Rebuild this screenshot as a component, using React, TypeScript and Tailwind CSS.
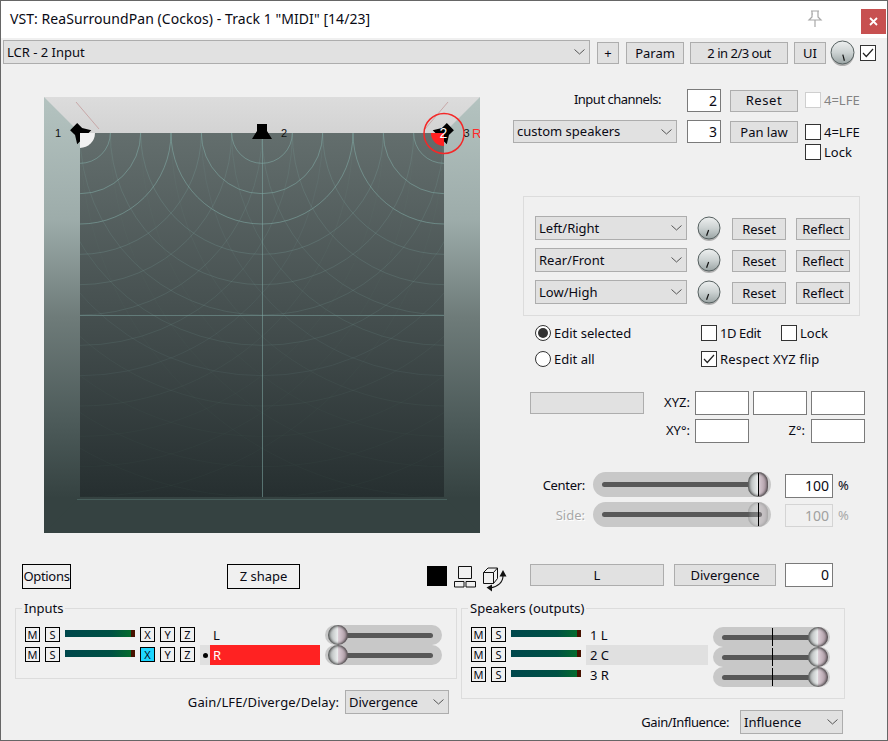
import React from "react";

const Chevron = () => (
  <svg width="11" height="6" viewBox="0 0 11 6" className="shrink-0">
    <path d="M0.5 0.5 L5.5 5 L10.5 0.5" fill="none" stroke="#555" strokeWidth="1" />
  </svg>
);

function Select({ label, className }: { label: string; className: string }) {
  return (
    <div className={"flex items-center justify-between pl-[3px] pr-[4px] bg-[#e1e1e1] border border-[#adadad] " + className}>
      <span className="whitespace-nowrap">{label}</span>
      <Chevron />
    </div>
  );
}

function Btn({ label, className }: { label?: string; className: string }) {
  return (
    <div className={"flex items-center justify-center bg-[#e1e1e1] border border-[#adadad] whitespace-nowrap shrink-0 " + className}>
      {label}
    </div>
  );
}

function Input({ value, className }: { value?: string; className: string }) {
  return (
    <div className={"flex items-center justify-end pr-[3px] bg-white border border-[#7a7a7a] shrink-0 text-[14px] " + className}>
      {value}
    </div>
  );
}

function Check({ label, on, dim, className }: { label: string; on?: boolean; dim?: boolean; className?: string }) {
  return (
    <div className={"flex items-center h-[16px] whitespace-nowrap " + (className ?? "")}>
      <div className={"w-[16px] h-[16px] shrink-0 bg-white border flex items-center justify-center " + (dim ? "border-[#cfcfcf]" : "border-[#333]")}>
        {on && (
          <svg width="12" height="10" viewBox="0 0 12 10">
            <path d="M1 5 L4.3 8.5 L11 1" fill="none" stroke="#222" strokeWidth="1.2" />
          </svg>
        )}
      </div>
      <span className={"ml-[3px] " + (dim ? "text-[#838383]" : "")}>{label}</span>
    </div>
  );
}

function Radio({ label, on, className }: { label: string; on?: boolean; className?: string }) {
  return (
    <div className={"flex items-center h-[16px] whitespace-nowrap " + (className ?? "")}>
      <div className="w-[16px] h-[16px] shrink-0 rounded-full bg-white border border-[#333] flex items-center justify-center">
        {on && <div className="w-[10px] h-[10px] rounded-full bg-[#333]" />}
      </div>
      <span className="ml-[3px]">{label}</span>
    </div>
  );
}

function Knob({ size, angle, className }: { size: number; angle: number; className?: string }) {
  const id = "k" + size + "-" + angle;
  const r = size / 2 - 1;
  const c = size / 2;
  const a = (angle * Math.PI) / 180;
  return (
    <svg width={size} height={size + 2} viewBox={`0 0 ${size} ${size + 2}`} className={"shrink-0 " + (className ?? "")}>
      <defs>
        <linearGradient id={id} x1="0" y1="0" x2="0" y2="1">
          <stop offset="0" stopColor="#eef0f0" />
          <stop offset="0.5" stopColor="#ccd2d2" />
          <stop offset="1" stopColor="#9aa4a4" />
        </linearGradient>
      </defs>
      <circle cx={c} cy={c + 2} r={r} fill="#b0b0b0" />
      <circle cx={c} cy={c} r={r} fill={`url(#${id})`} stroke="#566060" strokeWidth="1" />
      <line
        x1={c + Math.sin(a) * (r * 0.1)}
        y1={c + 1 - Math.cos(a) * (r * 0.1)}
        x2={c + Math.sin(a) * (r * 0.65)}
        y2={c + 1 - Math.cos(a) * (r * 0.65)}
        stroke="#111"
        strokeWidth="1.2"
      />
    </svg>
  );
}

function Thumb({ pos, faded }: { pos: number; faded?: boolean }) {
  return (
    <div
      className={
        "absolute top-0 bottom-0 w-[20px] rounded-full shadow-[inset_0_0_3px_1px_#3c3c3c] bg-[linear-gradient(90deg,#a9aeae_0%,#e9ecec_48%,#d9ccd4_52%,#a38f99_100%)] " +
        (faded ? "opacity-25" : "")
      }
      style={{ left: pos }}
    />
  );
}

function Slider({ thumb, tick, faded, className }: { thumb: number; tick?: number; faded?: boolean; className: string }) {
  return (
    <div className={"relative bg-[#c8c8c8] rounded-full flex items-center shrink-0 px-[9px] " + className}>
      <div className="h-[5px] w-full rounded-full bg-[#585858]" />
      <Thumb pos={thumb} faded={faded} />
      {tick !== undefined && <div className="absolute top-[1px] bottom-[1px] w-[1px] bg-black" style={{ left: tick }} />}
    </div>
  );
}

function Meter({ className }: { className?: string }) {
  return (
    <div className={"w-[70px] h-[7px] flex shrink-0 " + (className ?? "")}>
      <div className="flex-1 bg-[linear-gradient(90deg,#00474c_0%,#005144_70%,#046b2e_100%)]" />
      <div className="w-[4px] bg-[#471200]" />
    </div>
  );
}

function Mini({ label, cyan, className }: { label: string; cyan?: boolean; className?: string }) {
  return (
    <div
      className={
        "w-[15px] h-[15px] border border-black flex items-center justify-center text-[11px] leading-none shrink-0 " +
        (cyan ? "bg-[#1ed6ff] " : "") +
        (className ?? "")
      }
    >
      {label}
    </div>
  );
}

function Room() {
  const step = 364 / 12;
  const arcs: React.ReactNode[] = [];
  [36, 218, 400].forEach((cx) => {
    for (let k = 1; k <= 12; k++) {
      const o = k <= 3 ? 0.5 : Math.max(0.03, 0.24 - (k - 3) * 0.03);
      arcs.push(<circle key={cx + "-" + k} cx={cx} cy={36} r={k * step} fill="none" stroke="#86b4ae" strokeWidth="1" opacity={o} />);
    }
  });
  const spk = "-5,-9 5,-9 5,-2 10,6 -10,6 -5,-2";
  return (
    <svg width="436" height="436" viewBox="0 0 436 436" className="shrink-0">
      <defs>
        <linearGradient id="floor" x1="0" y1="0" x2="0" y2="1">
          <stop offset="0" stopColor="#636e6d" />
          <stop offset="0.5" stopColor="#454f4f" />
          <stop offset="1" stopColor="#262f30" />
        </linearGradient>
        <linearGradient id="wall" x1="0" y1="0" x2="0" y2="1">
          <stop offset="0" stopColor="#b4c3c0" />
          <stop offset="0.28" stopColor="#9dacaa" />
          <stop offset="0.5" stopColor="#6f7c7a" />
          <stop offset="0.75" stopColor="#4c5a59" />
          <stop offset="0.92" stopColor="#354241" />
          <stop offset="1" stopColor="#354241" />
        </linearGradient>
        <linearGradient id="top" x1="0" y1="0" x2="0" y2="1">
          <stop offset="0" stopColor="#dcdcdc" />
          <stop offset="1" stopColor="#d3d3d3" />
        </linearGradient>
        <clipPath id="fc">
          <rect x="36" y="36" width="364" height="364" />
        </clipPath>
      </defs>
      <rect x="0" y="0" width="436" height="436" fill="url(#wall)" />
      <polygon points="0,436 436,436 400,400 36,400" fill="#354241" />
      <polygon points="0,0 436,0 400,36 36,36" fill="url(#top)" />
      <rect x="36" y="36" width="364" height="364" fill="url(#floor)" />
      <g clipPath="url(#fc)">
        {arcs}
        <line x1="36" y1="218.5" x2="400" y2="218.5" stroke="#7fa8a4" opacity="0.5" />
        <line x1="218.5" y1="36" x2="218.5" y2="400" stroke="#7fa8a4" opacity="0.55" />
      </g>
      <line x1="33" y1="402.5" x2="403" y2="402.5" stroke="#55736f" opacity="0.6" />
      <line x1="32" y1="5" x2="55" y2="32" stroke="#c8a8a8" />
      <line x1="404" y1="5" x2="381" y2="32" stroke="#c8a8a8" />
      <polygon points={spk} transform="translate(218 36)" fill="#000" />
      <polygon points={spk} transform="translate(36 36) rotate(-45)" fill="#000" />
      <polygon points={spk} transform="translate(400 36) rotate(45)" fill="#000" />
      <path d="M36 36 H51 A15 15 0 0 1 36 51 Z" fill="#f1f1f1" />
      <path d="M400 36 H387 A13 13 0 0 0 400 49 Z" fill="#ff2222" />
      <circle cx="400" cy="36.5" r="20" fill="none" stroke="#f42828" strokeWidth="1.5" />
      <g fontFamily="'Liberation Sans', sans-serif" fontSize="11">
        <text x="11" y="40" fill="#111">1</text>
        <text x="237" y="40" fill="#111">2</text>
        <text x="419.5" y="40" fill="#111">3</text>
        <text x="428" y="40.5" fill="#ff2a2a" fontSize="13">R</text>
      </g>
      <text x="399.5" y="41" textAnchor="middle" fill="#fff" fontSize="14" fontFamily="'Liberation Sans', sans-serif">2</text>
    </svg>
  );
}

function GroupBox({ title, className, children }: { title: string; className: string; children: React.ReactNode }) {
  return (
    <div className={"relative border border-[#dcdcdc] " + className}>
      <span className="absolute left-[6px] -top-[10px] bg-[#f0f0f0] px-[2px] leading-[18px] whitespace-nowrap">{title}</span>
      {children}
    </div>
  );
}

function AxisRow({ label }: { label: string }) {
  return (
    <div className="flex items-start h-[26px]">
      <Select label={label} className="w-[152px] h-[24px]" />
      <Knob size={24} angle={200} className="ml-[10px]" />
      <Btn label="Reset" className="ml-[11px] mt-[2px] w-[54px] h-[22px]" />
      <Btn label="Reflect" className="ml-[10px] mt-[2px] w-[54px] h-[22px]" />
    </div>
  );
}

function InputRow({ name, active }: { name: string; active?: boolean }) {
  return (
    <div className="flex items-start h-[20px]">
      <Mini label="M" className="mt-[2px]" />
      <Mini label="S" className="mt-[2px] ml-[5px]" />
      <Meter className="mt-[5px] ml-[5px]" />
      <Mini label="X" cyan={active} className="mt-[2px] ml-[5px]" />
      <Mini label="Y" className="mt-[2px] ml-[5px]" />
      <Mini label="Z" className="mt-[2px] ml-[5px]" />
      <div className={"ml-[5px] w-[10px] h-[20px] flex items-center justify-center " + (active ? "bg-[#e0e0e0]" : "")}>
        {active && <div className="w-[5px] h-[5px] rounded-full bg-black" />}
      </div>
      <div className={"w-[110px] h-[20px] flex items-center pl-[3px] " + (active ? "bg-[#ff2222] text-white" : "")}>{name}</div>
      <Slider thumb={3} className="ml-[5px] w-[117px] h-[20px]" />
    </div>
  );
}

function SpeakerRow({ name, active }: { name: string; active?: boolean }) {
  return (
    <div className="flex items-start h-[20px]">
      <Mini label="M" className="mt-[2px]" />
      <Mini label="S" className="mt-[2px] ml-[5px]" />
      <Meter className="mt-[5px] ml-[5px]" />
      <div className={"ml-[5px] w-[122px] h-[20px] flex items-center pl-[4px] " + (active ? "bg-[#e0e0e0]" : "")}>{name}</div>
      <Slider thumb={95} tick={59} className="ml-[5px] mt-[2px] w-[117px] h-[20px]" />
    </div>
  );
}

export default function App() {
  return (
    <div className="w-[888px] h-[741px] overflow-hidden bg-[#f0f0f0] border border-[#666] text-[#0a0a14] text-[13px] leading-none [font-family:'Noto_Sans',sans-serif]">
      {/* Title bar */}
      <div className="h-[37px] bg-white flex items-start">
        <div className="ml-[9px] mt-[11px] text-[14px] tracking-[0.06px] whitespace-nowrap">VST: ReaSurroundPan (Cockos) - Track 1 "MIDI" [14/23]</div>
        <svg width="16" height="18" viewBox="0 0 16 18" className="ml-auto mt-[9px] mr-[38px]">
          <path d="M4 1 H12 M5 1 V7 L2 10 H14 L11 7 V1 M8 10 V17 M5 4 H6 " fill="none" stroke="#a8a8a8" strokeWidth="1.2" />
        </svg>
        <div className="mt-[8px] mr-[1px] w-[25px] h-[25px] bg-[#c75050] flex items-center justify-center">
          <svg width="9" height="9" viewBox="0 0 9 9">
            <path d="M1 1 L8 8 M8 1 L1 8" stroke="#fff" strokeWidth="1.8" />
          </svg>
        </div>
      </div>

      {/* Toolbar */}
      <div className="h-[28px] flex items-start pl-[2px] pt-[2px]">
        <Select label="LCR - 2 Input" className="w-[587px] h-[24px]" />
        <Btn label="+" className="ml-[7px] mt-[2px] w-[22px] h-[22px]" />
        <Btn label="Param" className="ml-[7px] mt-[2px] w-[58px] h-[22px]" />
        <Btn label="2 in 2/3 out" className="ml-[6px] mt-[2px] w-[98px] h-[22px] tracking-[-0.5px]" />
        <Btn label="UI" className="ml-[6px] mt-[2px] w-[32px] h-[22px]" />
        <Knob size={25} angle={165} className="ml-[4px]" />
        <div className="ml-[5px] mt-[5px] w-[16px] h-[16px] bg-white border border-[#333] flex items-center justify-center">
          <svg width="12" height="10" viewBox="0 0 12 10">
            <path d="M1 5 L4.3 8.5 L11 1" fill="none" stroke="#222" strokeWidth="1.2" />
          </svg>
        </div>
      </div>

      {/* Main */}
      <div className="h-[498px] flex items-start">
        <div className="ml-[43px] mt-[31px]">
          <Room />
        </div>
        <div className="w-[407px]">
          <div className="mt-[23px] flex items-start h-[22px]">
            <div className="w-[181px] text-right mt-[4px] tracking-[-0.5px]">Input channels:</div>
            <Input value="2" className="ml-[26px] w-[34px] h-[23px]" />
            <Btn label="Reset" className="ml-[9px] mt-[1px] w-[68px] h-[22px] pb-[1px] tracking-[0.6px]" />
            <Check label="4=LFE" dim className="ml-[7px] mt-[3px]" />
          </div>
          <div className="mt-[9px] flex items-start h-[40px] pl-[33px]">
            <Select label="custom speakers" className="w-[164px] h-[23px]" />
            <Input value="3" className="ml-[10px] w-[34px] h-[23px]" />
            <Btn label="Pan law" className="ml-[9px] mt-[1px] w-[68px] h-[22px]" />
            <div className="ml-[7px] mt-[4px] flex flex-col gap-[4px]">
              <Check label="4=LFE" />
              <Check label="Lock" />
            </div>
          </div>

          <div className="mt-[36px] ml-[43px] w-[337px] h-[120px] border border-[#dcdcdc] pl-[11px] pt-[19px] flex flex-col gap-[6px]">
            <AxisRow label="Left/Right" />
            <AxisRow label="Rear/Front" />
            <AxisRow label="Low/High" />
          </div>

          <div className="mt-[9px] pl-[55px] flex">
            <Radio label="Edit selected" on className="w-[166px]" />
            <Check label="1D Edit" className="w-[80px] tracking-[-0.4px]" />
            <Check label="Lock" />
          </div>
          <div className="mt-[10px] pl-[55px] flex">
            <Radio label="Edit all" className="w-[166px]" />
            <Check label="Respect XYZ flip" on className="tracking-[0.2px]" />
          </div>

          <div className="mt-[24px] flex items-start h-[24px] pl-[50px]">
            <div className="mt-[1px] w-[114px] h-[22px] bg-[#e1e1e1] border border-[#adadad] shrink-0" />
            <div className="w-[46px] text-right mt-[5px]">XYZ:</div>
            <Input className="ml-[5px] w-[54px] h-[24px]" />
            <Input className="ml-[4px] w-[54px] h-[24px]" />
            <Input className="ml-[4px] w-[54px] h-[24px]" />
          </div>
          <div className="mt-[4px] flex items-start h-[24px]">
            <div className="w-[210px] text-right mt-[5px]">XY°:</div>
            <Input className="ml-[5px] w-[54px] h-[24px]" />
            <div className="w-[56px] text-right mt-[5px]">Z°:</div>
            <Input className="ml-[6px] w-[54px] h-[24px]" />
          </div>

          <div className="mt-[29px] flex items-start h-[25px]">
            <div className="w-[105px] text-right mt-[7px] tracking-[-0.3px]">Center:</div>
            <Slider thumb={155} tick={165} className="ml-[8px] w-[178px] h-[25px]" />
            <Input value="100" className="ml-[14px] mt-[2px] w-[48px] h-[24px]" />
            <span className="ml-[5px] mt-[7px]">%</span>
          </div>
          <div className="mt-[5px] flex items-start h-[25px]">
            <div className="w-[105px] text-right mt-[7px] text-[#a8a8a8] [text-shadow:1px_1px_0_#fff]">Side:</div>
            <Slider thumb={155} tick={165} faded className="ml-[8px] w-[178px] h-[25px]" />
            <div className="ml-[14px] mt-[2px] w-[48px] h-[23px] flex items-center justify-end pr-[3px] border border-[#d4d4d4] text-[14px] text-[#a0a0a0]">100</div>
            <span className="ml-[5px] mt-[7px] text-[#a8a8a8]">%</span>
          </div>
        </div>
      </div>

      {/* Button strip */}
      <div className="h-[44px] flex items-start pl-[21px]">
        <div className="w-[49px] h-[25px] pb-[1px] tracking-[-0.3px] border border-black flex items-center justify-center shrink-0">Options</div>
        <div className="ml-[156px] w-[73px] h-[25px] pb-[1px] border border-black flex items-center justify-center shrink-0">Z shape</div>
        <div className="ml-[127px] mt-[2px] w-[20px] h-[20px] bg-black shrink-0" />
        <svg width="22" height="22" viewBox="0 0 22 22" className="ml-[7px] mt-[2px] shrink-0">
          <path d="M4.5 0.5 H17.5 V12.5 H4.5 Z M0.5 15.5 H10 V21 H0.5 Z M12 15.5 H21.5 V21 H12 Z" fill="none" stroke="#111" />
        </svg>
        <svg width="26" height="26" viewBox="0 0 26 26" className="ml-[7px] mt-[3px] shrink-0">
          <path d="M0.5 5.5 H10.5 V16.5 H0.5 Z M0.5 5.5 L5 1 H14.5 V11.5 L10.5 16.5 M10.5 5.5 L14.5 1" fill="none" stroke="#111" />
          <path d="M20 9 C20 15 15 20 7 21" fill="none" stroke="#111" strokeWidth="1.1" />
          <path d="M16.5 9.5 L20 3 L23.5 9.5 Z M9 17.5 L3.5 20.5 L9 24.5 Z" fill="#111" />
        </svg>
        <Btn label="L" className="ml-[21px] w-[134px] h-[22px]" />
        <Btn label="Divergence" className="ml-[10px] w-[102px] h-[22px]" />
        <Input value="0" className="ml-[9px] -mt-[1px] w-[48px] h-[24px]" />
      </div>

      {/* Bottom groups */}
      <div className="flex items-start pl-[14px]">
        <div className="w-[442px]">
          <GroupBox title="Inputs" className="h-[71px] pl-[9px] pt-[16px]">
            <InputRow name="L" />
            <InputRow name="R" active />
          </GroupBox>
          <div className="mt-[11px] flex items-center justify-end pr-[8px]">
            <span className="mr-[6px] tracking-[0.12px]">Gain/LFE/Diverge/Delay:</span>
            <Select label="Divergence" className="w-[104px] h-[24px]" />
          </div>
        </div>
        <div className="ml-[4px] w-[384px]">
          <GroupBox title="Speakers (outputs)" className="h-[91px] pl-[9px] pt-[16px]">
            <SpeakerRow name="1 L" />
            <SpeakerRow name="2 C" active />
            <SpeakerRow name="3 R" />
          </GroupBox>
          <div className="mt-[11px] flex items-center justify-end pr-[2px]">
            <span className="mr-[11px] tracking-[-0.4px]">Gain/Influence:</span>
            <Select label="Influence" className="w-[103px] h-[24px]" />
          </div>
        </div>
      </div>
    </div>
  );
}
